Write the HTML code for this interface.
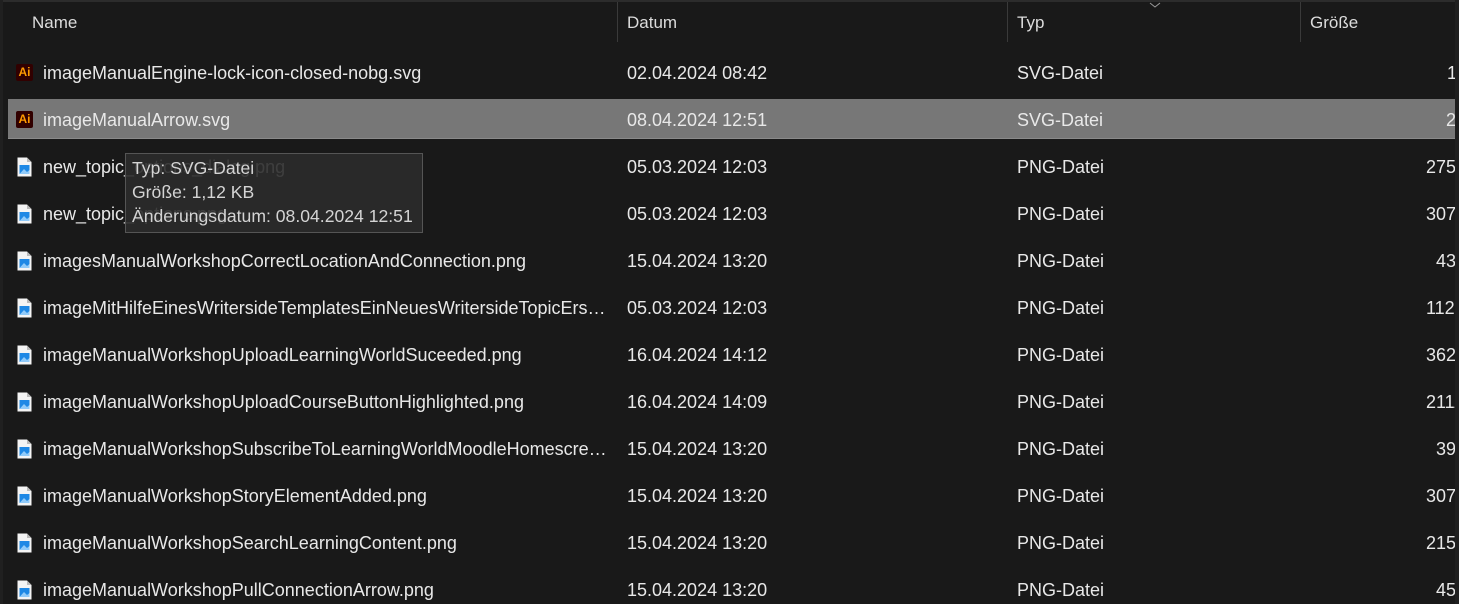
<!DOCTYPE html>
<html><head><meta charset="utf-8"><style>
html,body{margin:0;padding:0;background:#191919;width:1459px;height:604px;overflow:hidden;font-family:"Segoe UI","Liberation Sans",sans-serif;color:#e8e8e8;font-size:18px}
.wrap{position:absolute;left:0;top:0;width:1455px;height:604px;overflow:hidden}
.topline{position:absolute;left:0;top:0;width:1459px;height:2px;background:#2c2c2c}
.leftline{position:absolute;left:0;top:0;width:3px;height:604px;background:#202020}
.rstrip{position:absolute;left:1455px;top:0;width:4px;height:604px;background:#1f1f1f}
.h{position:absolute;top:13px;color:#dcdcdc;font-size:17px}
.div{position:absolute;top:2px;width:1px;height:40px;background:#3a3a3a}
.row{position:absolute;left:0;width:1455px;height:39px}
.row.sel{left:8px;width:1447px;background:#777;border-bottom:1px solid #8a8a8a}
.t{position:absolute;white-space:nowrap;line-height:22px}
.n{width:566px;overflow:hidden;text-overflow:ellipsis}
.ai{position:absolute;left:16px;width:17px;height:17px;background:#310000;border-radius:2px;color:#ff9a00;font-weight:bold;font-size:12px;line-height:17px;text-align:center;font-family:"Liberation Sans",sans-serif}
.tip{position:absolute;left:125px;top:153px;width:296px;height:78px;background:rgba(43,43,43,0.9);border:1px solid #555;color:#d4d4d4;font-size:17.6px}
.tip div{position:absolute;left:6px;white-space:nowrap}
</style></head><body>
<div class="wrap">
<div class="h" style="left:32px">Name</div>
<div class="h" style="left:627px">Datum</div>
<div class="h" style="left:1017px">Typ</div>
<div class="h" style="left:1310px">Größe</div>
<div class="div" style="left:617px"></div>
<div class="div" style="left:1007px"></div>
<div class="div" style="left:1300px"></div>
<svg style="position:absolute;left:1149px;top:2px" width="12" height="7"><path d="M1 1 L6 5 L11 1" stroke="#999" fill="none"/></svg>

<div class="row sel" style="top:99px"></div>

<div id="rows"></div>
</div>
<div class="topline"></div><div class="leftline"></div><div class="rstrip"></div>
<div class="tip">
<div style="top:4px">Typ: SVG-Datei</div>
<div style="top:28px">Größe: 1,12 KB</div>
<div style="top:52px">Änderungsdatum: 08.04.2024 12:51</div>
</div>
<script>
var d=[
["ai","imageManualEngine-lock-icon-closed-nobg.svg","02.04.2024 08:42","SVG-Datei","1",1447],
["ai","imageManualArrow.svg","08.04.2024 12:51","SVG-Datei","2",1446],
["p","new_topic_options_dialog.png","05.03.2024 12:03","PNG-Datei","2759",1426],
["p","new_topic_options.png","05.03.2024 12:03","PNG-Datei","3071",1426],
["p","imagesManualWorkshopCorrectLocationAndConnection.png","15.04.2024 13:20","PNG-Datei","432",1436],
["p","imageMitHilfeEinesWritersideTemplatesEinNeuesWritersideTopicErstellen.png","05.03.2024 12:03","PNG-Datei","1122",1426],
["p","imageManualWorkshopUploadLearningWorldSuceeded.png","16.04.2024 14:12","PNG-Datei","3625",1426],
["p","imageManualWorkshopUploadCourseButtonHighlighted.png","16.04.2024 14:09","PNG-Datei","2111",1426],
["p","imageManualWorkshopSubscribeToLearningWorldMoodleHomescreen.png","15.04.2024 13:20","PNG-Datei","399",1436],
["p","imageManualWorkshopStoryElementAdded.png","15.04.2024 13:20","PNG-Datei","3077",1426],
["p","imageManualWorkshopSearchLearningContent.png","15.04.2024 13:20","PNG-Datei","2155",1426],
["p","imageManualWorkshopPullConnectionArrow.png","15.04.2024 13:20","PNG-Datei","455",1436]];
var h="";
d.forEach(function(r,i){var c=73+47*i;var ty=c-11;
var ic=r[0]=="ai"?'<div class="ai" style="top:'+(c-9)+'px">Ai</div>':
'<svg style="position:absolute;left:16px;top:'+(c-10)+'px" width="17" height="20"><path d="M1.5 0.5 H11 L15.5 5 V19.5 H1.5 Z" fill="#f4f4f4"/><path d="M11 0.5 V5 H15.5" fill="#bbb"/><rect x="3.5" y="8" width="10" height="9" fill="#1e88e5"/><path d="M3.5 17 L8 12 L11 15 L13.5 13 V17Z" fill="#90caf9"/></svg>';
h+=ic+'<div class="t n" style="left:43px;top:'+ty+'px">'+r[1]+'</div><div class="t" style="left:627px;top:'+ty+'px">'+r[2]+'</div><div class="t" style="left:1017px;top:'+ty+'px">'+r[3]+'</div><div class="t" style="left:'+r[5]+'px;top:'+ty+'px">'+r[4]+' KB</div>';});
document.getElementById("rows").innerHTML=h;
</script>
</body></html>
